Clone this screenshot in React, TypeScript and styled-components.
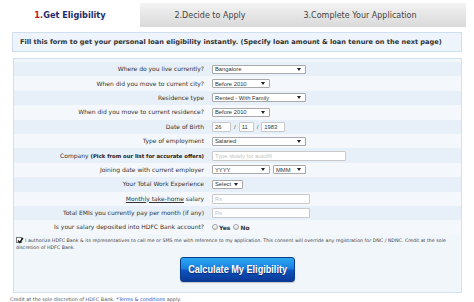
import React from "react";
import styled, { createGlobalStyle } from "styled-components";

const Global = createGlobalStyle`
  html, body { margin: 0; padding: 0; background: #fff; }
  body {
    width: 474px; height: 302px; overflow: hidden;
    font-family: "DejaVu Sans", Verdana, sans-serif;
  }
  * { box-sizing: border-box; }
`;

const Page = styled.div`
  width: 474px;
  padding: 3px 12px 0 12px;
`;

const Tabs = styled.div`
  display: flex;
  height: 24px;
  margin: 0 -4px 0 -12px;
`;

const Tab = styled.div<{ $active?: boolean; $w: number; $pr?: number }>`
  width: ${(p) => p.$w}px;
  padding-right: ${(p) => p.$pr ?? 0}px;
  display: flex;
  align-items: center;
  justify-content: center;
  font-size: ${(p) => (p.$active ? 8.2 : 8)}px;
  font-weight: ${(p) => (p.$active ? 700 : 400)};
  color: ${(p) => (p.$active ? "#1c2d6b" : "#444")};
  background: ${(p) => (p.$active ? "#fff" : "linear-gradient(#f3f3f3, #d9d9d9)")};
  white-space: nowrap;
`;

const Num = styled.span`
  color: #d0121b;
`;

const InfoBar = styled.div`
  margin-top: 5px;
  height: 20px;
  border: 1px solid #cfdff0;
  background: #edf4fb;
  padding-left: 7px;
  display: flex;
  align-items: center;
  font-size: 6.6px;
  font-weight: 700;
  color: #333;
  white-space: nowrap;
`;

const Panel = styled.div`
  margin: 6px 0 0 1px;
  border: 1px solid #d2e1f0;
  background: #f1f6fb;
  padding: 3px 0 10px;
`;

const Row = styled.div<{ $odd: boolean }>`
  display: grid;
  grid-template-columns: 198px 1fr;
  align-items: center;
  height: 14.4px;
  background: ${(p) => (p.$odd ? "#e7eff8" : "#f4f8fc")};
`;

const Label = styled.div`
  text-align: right;
  padding-right: 8px;
  font-size: 6px;
  line-height: 8px;
  color: #333;
  white-space: nowrap;
`;

const Strong = styled.b`
  color: #222;
  font-size: 5.3px;
`;

const Under = styled.span`
  text-decoration: underline;
`;

const Field = styled.div`
  display: flex;
  align-items: center;
  gap: 3px;
`;

const SelectBox = styled.div<{ $w: number }>`
  width: ${(p) => p.$w}px;
  height: 9px;
  border: 1px solid #a9a9a9;
  border-radius: 1px;
  background: #fff;
  font-family: "Liberation Sans", Arial, sans-serif;
  font-size: 5.8px;
  color: #333;
  padding: 0 4px 0 2px;
  display: flex;
  align-items: center;
  justify-content: space-between;
  white-space: nowrap;
`;

const TextInput = styled.input<{ $w: number }>`
  display: block;
  width: ${(p) => p.$w}px;
  height: 10px;
  border: 1px solid #c9c9c9;
  border-radius: 1px;
  background: #fff;
  font-family: "Liberation Sans", Arial, sans-serif;
  font-size: 5.8px;
  color: #333;
  padding: 0 2px;
  margin: 0;
  outline: none;
  &::placeholder { color: #c4c4c4; }
`;

const Slash = styled.span`
  font-family: "Liberation Sans", Arial, sans-serif;
  font-size: 6px;
  color: #555;
`;

const Radio = styled.span`
  display: inline-block;
  width: 6px;
  height: 6px;
  border-radius: 50%;
  border: 1px solid #a0a0a0;
  background: linear-gradient(#fff, #dcdcdc);
`;

const RadioText = styled.span`
  font-size: 6px;
  font-weight: 700;
  color: #333;
  margin-left: -2px;
`;

const Consent = styled.div`
  padding: 2.7px 2px 0 2px;
  font-size: 4.75px;
  line-height: 7px;
  color: #444;
`;

const Check = styled.span`
  display: inline-block;
  width: 6px;
  height: 6px;
  border: 1px solid #7a7a7a;
  background: #fff;
  vertical-align: -1px;
  margin-right: 3px;
  position: relative;
  svg { position: absolute; left: -0.5px; top: -1px; }
`;

const ButtonWrap = styled.div`
  display: flex;
  justify-content: center;
  margin-top: 5.5px;
`;

const CalcButton = styled.button`
  width: 115px;
  height: 25px;
  border: 1px solid #0a3a8c;
  border-radius: 3px;
  background: linear-gradient(#2ba8f1 0%, #1a80df 45%, #0d52bd 55%, #0a3a96 100%);
  color: #fff;
  font-family: "Liberation Sans", Arial, sans-serif;
  font-weight: 700;
  font-size: 11px;
  text-shadow: 0 1px 1px rgba(0, 0, 40, 0.5);
  box-shadow: 0 1px 1px rgba(0, 0, 0, 0.2);
  padding: 0;
  white-space: nowrap;
  display: flex;
  align-items: center;
  justify-content: center;
  cursor: pointer;
`;

const Narrow = styled.span`
  display: inline-block;
  transform: scaleX(0.83);
`;

const Footer = styled.div`
  margin: 3px 0 0 -2px;
  font-size: 4.9px;
  line-height: 6px;
  color: #555;
  white-space: nowrap;
`;

const Link = styled.span`
  color: #2a4fc8;
`;

const Arrow = () => (
  <svg width="4" height="3" viewBox="0 0 4 3">
    <path d="M0 0 L4 0 L2 3 Z" fill="#222" />
  </svg>
);

const Select = ({ w, children }: { w: number; children: React.ReactNode }) => (
  <SelectBox $w={w}>
    <span>{children}</span>
    <Arrow />
  </SelectBox>
);

type RowDef = { label: React.ReactNode; field: React.ReactNode };

const rows: RowDef[] = [
  { label: "Where do you live currently?", field: <Select w={94}>Bangalore</Select> },
  { label: "When did you move to current city?", field: <Select w={58}>Before 2010</Select> },
  { label: "Residence type", field: <Select w={94}>Rented - With Family</Select> },
  { label: "When did you move to current residence?", field: <Select w={58}>Before 2010</Select> },
  {
    label: "Date of Birth",
    field: (
      <Field>
        <TextInput $w={19} defaultValue="26" />
        <Slash>/</Slash>
        <TextInput $w={15} defaultValue="11" />
        <Slash>/</Slash>
        <TextInput $w={24} defaultValue="1983" />
      </Field>
    ),
  },
  { label: "Type of employment", field: <Select w={94}>Salaried</Select> },
  {
    label: (
      <>
        Company <Strong>(Pick from our list for accurate offers)</Strong>
      </>
    ),
    field: <TextInput $w={134} placeholder="Type slowly for autofill" />,
  },
  {
    label: "Joining date with current employer",
    field: (
      <Field>
        <Select w={58}>YYYY</Select>
        <Select w={33}>MMM</Select>
      </Field>
    ),
  },
  { label: "Your Total Work Experience", field: <Select w={31}>Select</Select> },
  {
    label: (
      <>
        <Under>Monthly take-home</Under> salary
      </>
    ),
    field: <TextInput $w={98} placeholder="Rs" />,
  },
  { label: "Total EMIs you currently pay per month (if any)", field: <TextInput $w={98} placeholder="Rs" /> },
  {
    label: "Is your salary deposited into HDFC Bank account?",
    field: (
      <Field>
        <Radio />
        <RadioText>Yes</RadioText>
        <Radio />
        <RadioText>No</RadioText>
      </Field>
    ),
  },
];

export default function App() {
  return (
    <>
      <Global />
      <Page>
        <Tabs>
          <Tab $active $w={140}>
            <span>
              <Num>1.</Num>Get Eligibility
            </span>
          </Tab>
          <Tab $w={140}>2.Decide to Apply</Tab>
          <Tab $w={186} $pr={26}>3.Complete Your Application</Tab>
        </Tabs>
        <InfoBar>
          Fill this form to get your personal loan eligibility instantly. (Specify loan amount &amp; loan tenure on the next page)
        </InfoBar>
        <Panel>
          {rows.map((r, i) => (
            <Row key={i} $odd={i % 2 === 0}>
              <Label>{r.label}</Label>
              <div>{r.field}</div>
            </Row>
          ))}
          <Consent>
            <Check>
              <svg width="7" height="7" viewBox="0 0 7 7">
                <path d="M1 3.5 L2.8 5.5 L6 1" stroke="#111" strokeWidth="1.3" fill="none" />
              </svg>
            </Check>
            I authorize HDFC Bank &amp; its representatives to call me or SMS me with reference to my application. This
            consent will override any registration for DNC / NDNC. Credit at the sole discretion of HDFC Bank.
          </Consent>
          <ButtonWrap>
            <CalcButton>
              <Narrow>Calculate My Eligibility</Narrow>
            </CalcButton>
          </ButtonWrap>
        </Panel>
        <Footer>
          Credit at the sole discretion of HDFC Bank. <Link>*Terms &amp; conditions</Link> apply.
        </Footer>
      </Page>
    </>
  );
}
